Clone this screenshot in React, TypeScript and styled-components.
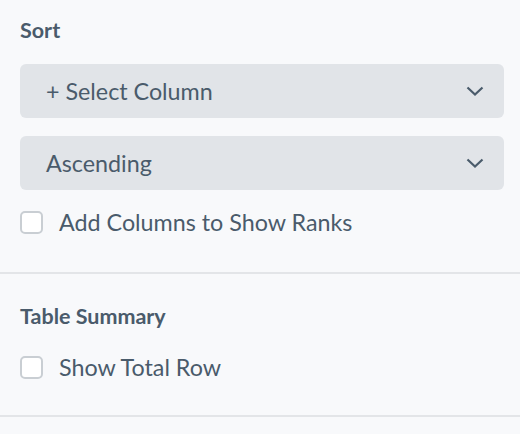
import React from "react";
import styled, { createGlobalStyle } from "styled-components";

const Global = createGlobalStyle`
  html, body { margin: 0; padding: 0; background: #f8f9fb; }
  body { font-family: Lato, "Open Sans", sans-serif; color: #4a5b6b; }
`;

const Panel = styled.div`
  width: 520px;
  display: flex;
  flex-direction: column;
`;

const Section = styled.section<{ $top: number; $bottom: number }>`
  padding: ${(p) => p.$top}px 16px ${(p) => p.$bottom}px 20px;
  border-bottom: 2px solid #e3e5e8;
  display: flex;
  flex-direction: column;
`;

const Title = styled.h3<{ $gap: number }>`
  margin: 0 0 ${(p) => p.$gap}px;
  font-size: 21.5px;
  line-height: 24px;
  font-weight: 700;
`;

const Select = styled.div`
  height: 54px;
  border-radius: 6px;
  background: #e1e4e8;
  display: flex;
  align-items: center;
  justify-content: space-between;
  padding: 0 20px 0 26px;
  margin-bottom: 18px;
  font-size: 23.3px;
  box-sizing: border-box;
`;

const CheckRow = styled.label`
  display: flex;
  align-items: center;
  gap: 16px;
  font-size: 23.3px;
  line-height: 28px;
`;

const Box = styled.span`
  width: 19px;
  height: 19px;
  border: 2px solid #c9ced3;
  border-radius: 5px;
  background: #fff;
  flex: none;
`;

const Chevron = () => (
  <svg width="18" height="10" viewBox="0 0 18 10" fill="none">
    <path d="M1.5 1.5 L9 8.5 L16.5 1.5" stroke="#4a5b6b" strokeWidth="2.2" />
  </svg>
);

export default function App() {
  return (
    <>
      <Global />
      <Panel>
        <Section $top={18} $bottom={36}>
          <Title $gap={22}>Sort</Title>
          <Select>
            <span>+ Select Column</span>
            <Chevron />
          </Select>
          <Select>
            <span>Ascending</span>
            <Chevron />
          </Select>
          <CheckRow>
            <Box />
            Add Columns to Show Ranks
          </CheckRow>
        </Section>
        <Section $top={30} $bottom={34}>
          <Title $gap={25}>Table Summary</Title>
          <CheckRow>
            <Box />
            Show Total Row
          </CheckRow>
        </Section>
      </Panel>
    </>
  );
}
